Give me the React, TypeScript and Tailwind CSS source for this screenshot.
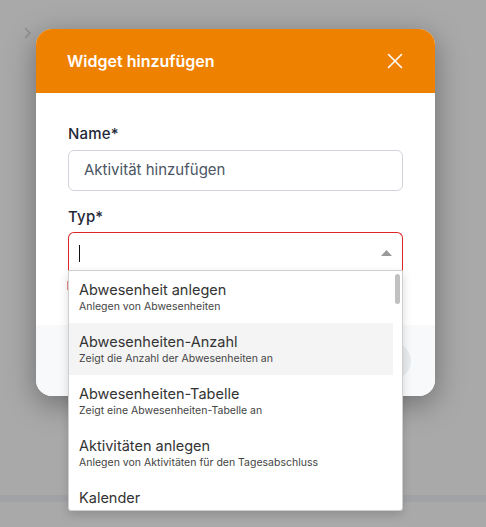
import React from "react";

const items = [
  { title: "Abwesenheit anlegen", sub: "Anlegen von Abwesenheiten" },
  { title: "Abwesenheiten-Anzahl", sub: "Zeigt die Anzahl der Abwesenheiten an", active: true },
  { title: "Abwesenheiten-Tabelle", sub: "Zeigt eine Abwesenheiten-Tabelle an" },
  { title: "Aktivitäten anlegen", sub: "Anlegen von Aktivitäten für den Tagesabschluss" },
  { title: "Kalender", sub: "" },
];

export default function App() {
  return (
    <div
      className="relative h-[527px] w-full overflow-hidden bg-[#a9a9a9]"
      style={{ fontFamily: "Inter, 'Noto Sans', sans-serif" }}
    >
      {/* Background page (dimmed) */}
      <div className="flex h-full flex-col">
        <div className="flex h-[66px] items-center px-[24px] text-[#8d8d8d]">
          <svg width="8" height="12" viewBox="0 0 8 12" fill="none">
            <path d="M1.5 1.5 6 6l-4.5 4.5" stroke="currentColor" strokeWidth="1.5" strokeLinecap="round" strokeLinejoin="round" />
          </svg>
        </div>
        <div className="flex-1" />
        <div className="mb-[25px] h-[7px] bg-[#a1a2a6]" />
      </div>

      {/* Modal */}
      <div className="absolute left-[36px] top-[29px] w-[399px] rounded-[16px] bg-white shadow-[0_8px_30px_rgba(0,0,0,0.35)]">
        <div className="flex h-[64px] items-center justify-between rounded-t-[16px] bg-[#ef8100] pl-[31px] pr-[32px]">
          <span className="text-[16px] font-semibold text-white">Widget hinzufügen</span>
          <svg width="16" height="16" viewBox="0 0 16 16" fill="none">
            <path d="M1.5 1.5l13 13M14.5 1.5l-13 13" stroke="white" strokeWidth="1.6" strokeLinecap="round" />
          </svg>
        </div>

        <div className="h-[232px] px-[32px] pt-[30px]">
          <div className="text-[15px] font-medium leading-[22px] tracking-[0.2px] text-[#1f2937]">Name*</div>
          <div className="mt-[5px] flex h-[41px] items-center rounded-[6px] border border-[#d1d5db] px-[15px] text-[15px] text-[#4b5563]">
            Aktivität hinzufügen
          </div>
          <div className="mt-[15px] text-[15px] font-medium leading-[22px] tracking-[0.2px] text-[#1f2937]">Typ*</div>
          <div className="relative mt-[4px]">
            <div className="flex h-[41px] items-center justify-between rounded-t-[6px] border border-b-0 border-[#dc2626] pl-[10px] pr-[10px]">
              <div className="h-[17px] w-px bg-[#111]" />
              <svg width="11" height="6" viewBox="0 0 11 6">
                <path d="M0 6 5.5 0 11 6z" fill="#9a9a9a" />
              </svg>
            </div>
            {/* edge of the validation message, mostly hidden under the list */}
            <div className="ml-[-1px] mt-[8px] h-[9px] w-[2px] bg-[#f08a8a]" />

            {/* Dropdown */}
            <div className="absolute left-0 top-[38px] z-10 h-[241px] w-[335px] overflow-hidden rounded-b-[3px] border border-[#cfcfcf] bg-white shadow-[0_4px_10px_rgba(0,0,0,0.15)]">
              <div className="absolute right-[2px] top-[3px] h-[30px] w-[5px] rounded-full bg-[#c1c1c1]" />
              <div className="mr-[9px] flex flex-col">
                {items.map((it) => (
                  <div
                    key={it.title}
                    className={`flex h-[52px] flex-col justify-center px-[10px] ${it.active ? "bg-[#f4f4f4]" : ""}`}
                  >
                    <div className="text-[14.5px] leading-[20px] text-[#333]">{it.title}</div>
                    {it.sub && <div className="text-[10.5px] leading-[14px] text-[#444]">{it.sub}</div>}
                    {!it.sub && <div className="h-[14px]" />}
                  </div>
                ))}
              </div>
            </div>
          </div>
        </div>

        <div className="flex h-[71px] items-center justify-end rounded-b-[16px] bg-[#f8f9fb] px-[24px]">
          <div className="h-[36px] w-[60px] rounded-full bg-[#e9ecef]" />
        </div>
      </div>
    </div>
  );
}
